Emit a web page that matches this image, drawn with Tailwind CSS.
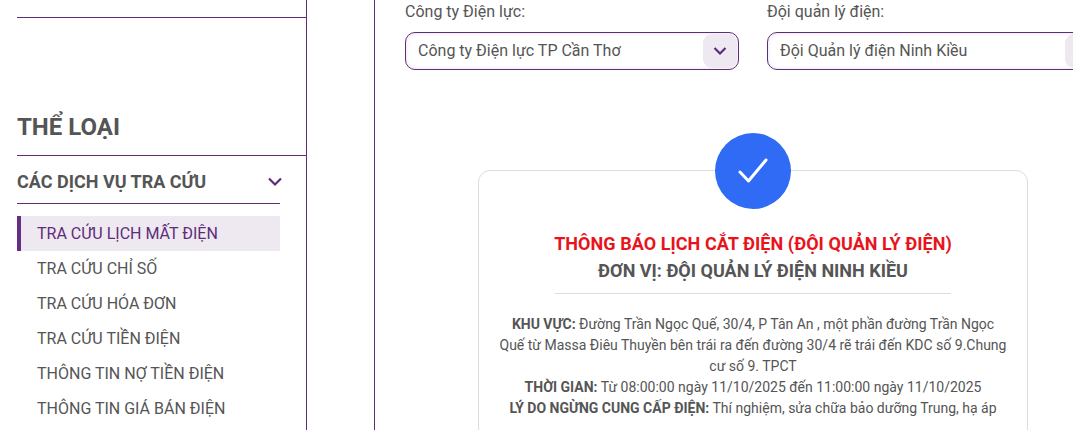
<!DOCTYPE html>
<html lang="vi">
<head>
  <meta charset="UTF-8">
  <title>Tra cứu lịch mất điện</title>
  <script src="https://cdn.jsdelivr.net/npm/@tailwindcss/browser@4"></script>
</head>
<body class="bg-white overflow-hidden font-['Roboto',sans-serif] text-[#555555]">
  <div class="flex h-[430px] w-[1073px] overflow-hidden">
    <!-- Cột trái -->
    <aside class="w-[307px] shrink-0 border-r border-[#5e2d79] pl-[17px]">
      <div class="h-[18px] border-b border-[#5e2d79]"></div>
      <h2 class="mt-[93px] h-[45px] border-b border-[#5e2d79] text-2xl font-bold leading-[32px]">THỂ LOẠI</h2>
      <div class="mr-[26px]">
        <div class="flex h-[48px] items-center justify-between border-b border-[#5e2d79] pt-[5px]">
          <span class="text-lg font-bold">CÁC DỊCH VỤ TRA CỨU</span>
          <svg class="mr-[-3px] h-[16px] w-[16px] text-[#5e2d79]" viewBox="0 0 16 16" fill="none" stroke="currentColor" stroke-width="2.2"><path d="M2 4.5 8 10.5 14 4.5"/></svg>
        </div>
        <ul class="mt-[12px] text-base">
          <li class="flex h-[35px] items-center border-l-4 border-[#662d85] bg-[#eee8f0] pl-4 text-[#5e2d79]">TRA CỨU LỊCH MẤT ĐIỆN</li>
          <li class="flex h-[35px] items-center pl-5">TRA CỨU CHỈ SỐ</li>
          <li class="flex h-[35px] items-center pl-5">TRA CỨU HÓA ĐƠN</li>
          <li class="flex h-[35px] items-center pl-5">TRA CỨU TIỀN ĐIỆN</li>
          <li class="flex h-[35px] items-center pl-5">THÔNG TIN NỢ TIỀN ĐIỆN</li>
          <li class="flex h-[35px] items-center pl-5">THÔNG TIN GIÁ BÁN ĐIỆN</li>
        </ul>
      </div>
    </aside>

    <div class="w-[68px] shrink-0 border-r border-[#5e2d79]"></div>

    <!-- Nội dung -->
    <main class="min-w-0 flex-1 pl-[30px]">
      <div class="flex gap-[28px]">
        <div class="w-[334px] shrink-0">
          <label class="block h-[32px] text-base leading-[23px]">Công ty Điện lực:</label>
          <div class="flex h-[38px] items-center justify-between rounded-[10px] border border-[#5e2d79] pl-3 pr-[1px] shadow-[inset_0_0_4px_rgba(94,45,121,0.15)]">
            <span class="text-base">Công ty Điện lực TP Cần Thơ</span>
            <span class="flex h-[34px] w-[34px] items-center justify-center rounded-[9px] bg-[#eee8f0]">
              <svg class="h-[14px] w-[14px] text-[#5e2d79]" viewBox="0 0 14 14" fill="none" stroke="currentColor" stroke-width="2.2"><path d="M1.5 4 7 9.5 12.5 4"/></svg>
            </span>
          </div>
        </div>
        <div class="w-[334px] shrink-0">
          <label class="block h-[32px] text-base leading-[23px]">Đội quản lý điện:</label>
          <div class="flex h-[38px] items-center justify-between rounded-[10px] border border-[#5e2d79] pl-3 pr-[1px] shadow-[inset_0_0_4px_rgba(94,45,121,0.15)]">
            <span class="text-base">Đội Quản lý điện Ninh Kiều</span>
            <span class="flex h-[34px] w-[34px] items-center justify-center rounded-[9px] bg-[#eee8f0]">
              <svg class="h-[14px] w-[14px] text-[#5e2d79]" viewBox="0 0 14 14" fill="none" stroke="currentColor" stroke-width="2.2"><path d="M1.5 4 7 9.5 12.5 4"/></svg>
            </span>
          </div>
        </div>
      </div>

      <div class="relative ml-[73px] mt-[100px] h-[300px] w-[550px] rounded-xl border border-[#dddddd] px-[76px] pt-[60px] text-center">
        <div class="absolute left-1/2 top-[-38px] flex h-[76px] w-[76px] -translate-x-1/2 items-center justify-center rounded-full bg-[#2f6bf5]">
          <svg class="h-[32px] w-[32px] text-white" viewBox="0 0 32 32" fill="none" stroke="currentColor" stroke-width="3" stroke-linecap="round" stroke-linejoin="round"><path d="M3 17 11.5 26 29 5"/></svg>
        </div>
        <h3 class="-mx-4 whitespace-nowrap text-lg leading-[26px] font-bold tracking-[0.05px] text-[#e8141c]">THÔNG BÁO LỊCH CẮT ĐIỆN (ĐỘI QUẢN LÝ ĐIỆN)</h3>
        <h4 class="border-b border-[#dddddd] pb-[8px] text-lg leading-[28px] font-bold">ĐƠN VỊ: ĐỘI QUẢN LÝ ĐIỆN NINH KIỀU</h4>
        <div class="-mx-[56px] mt-[20px] text-sm leading-[21px]">
          <p><b>KHU VỰC:</b> Đường Trần Ngọc Quế, 30/4, P Tân An , một phần đường Trần Ngọc Quế từ Massa Điêu Thuyền bên trái ra đến đường 30/4 rẽ trái đến KDC số 9.Chung cư số 9. TPCT</p>
          <p><b>THỜI GIAN:</b> Từ 08:00:00 ngày 11/10/2025 đến 11:00:00 ngày 11/10/2025</p>
          <p><b>LÝ DO NGỪNG CUNG CẤP ĐIỆN:</b> Thí nghiệm, sửa chữa bảo dưỡng Trung, hạ áp</p>
        </div>
      </div>
    </main>
  </div>
</body>
</html>
